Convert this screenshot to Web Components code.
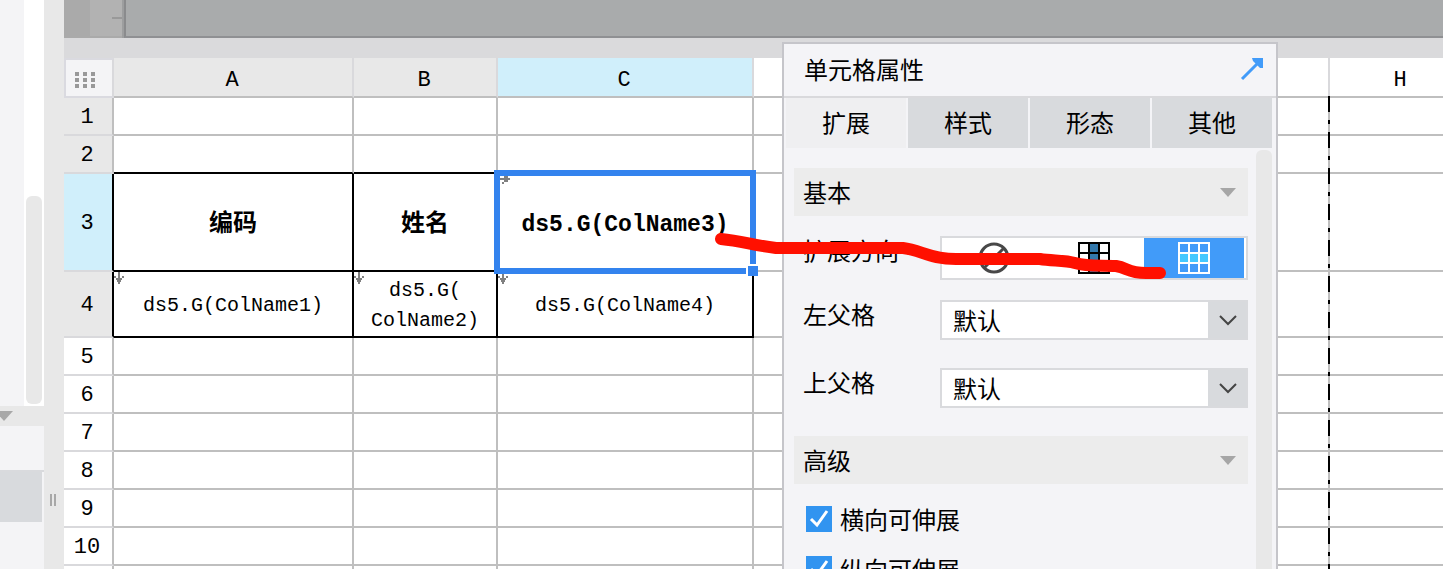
<!DOCTYPE html>
<html lang="zh-CN">
<head>
<meta charset="utf-8">
<title>单元格属性</title>
<style>
html, body { margin: 0; height: 100%; }
body { overflow: hidden; font-family: "Liberation Mono", "Noto Sans CJK SC", monospace; color: #000; }
</style>
</head>
<body>
<report-designer>
  <side-pane slot="side"></side-pane>
  <top-ruler slot="top"></top-ruler>
  <sheet-grid slot="sheet"></sheet-grid>
  <property-panel slot="panel">
    <span slot="title">单元格属性</span>
    <property-section heading="基本">
      <direction-field>扩展方向</direction-field>
      <select-field value="默认">左父格</select-field>
      <select-field value="默认">上父格</select-field>
    </property-section>
    <property-section heading="高级">
      <check-field>横向可伸展</check-field>
      <check-field>纵向可伸展</check-field>
    </property-section>
  </property-panel>
  <pen-mark slot="mark"></pen-mark>
</report-designer>

<script>
function define(name, html, setup) {
  const template = document.createElement('template');
  template.innerHTML = html;
  customElements.define(name, class extends HTMLElement {
    constructor() {
      super();
      this.attachShadow({ mode: 'open' }).append(template.content.cloneNode(true));
    }
    connectedCallback() { if (setup) setup(this, this.shadowRoot); }
  });
}

define('report-designer', `
<style>
:host { display: flex; position: relative; height: 100vh; overflow: hidden; background: #fff; }
.split { flex: 0 0 20px; background: #e8e8e8; position: relative; }
.grip { position: absolute; left: 6px; top: 494px; width: 2px; height: 12px; border: solid #a8a8a8; border-width: 0 2px; }
main { flex: 1; min-width: 0; display: flex; flex-direction: column; position: relative; overflow: hidden; }
.band { flex: 0 0 20px; background: #dadadc; }
</style>
<slot name="side"></slot>
<div class="split"><div class="grip"></div></div>
<main>
  <slot name="top"></slot>
  <div class="band"></div>
  <slot name="sheet"></slot>
  <slot name="panel"></slot>
</main>
<slot name="mark"></slot>`);

define('side-pane', `
<style>
:host { display: flex; flex-direction: column; flex: 0 0 44px; background: #f4f4f6; }
.upper { flex: 0 0 406px; display: flex; justify-content: flex-end; }
.track { width: 20px; box-sizing: border-box; padding: 196px 2px 2px; background: #fff; }
.thumb { height: 208px; border-radius: 6px; background: #e8e8e8; }
.bar { flex: 0 0 20px; background: #e8e8e8; }
.bar svg { display: block; }
.item { height: 44px; }
.active { height: 50px; border-top: 2px solid #d9dadd; }
.active div { height: 50px; margin-right: 2px; background: #d8dadd; }
</style>
<div class="upper"><div class="track"><div class="thumb"></div></div></div>
<div class="bar"><svg width="20" height="20"><path d="M-5 5H13L4 15Z" fill="#a8a8a8"/></svg></div>
<div class="item"></div>
<div class="active"><div></div></div>`);

define('top-ruler', `
<style>
:host { display: flex; flex: 0 0 38px; background: #aaa; }
.gutter { width: 26px; }
.scale { width: 32px; height: 36px; background: #b2b2b2; display: flex; justify-content: flex-end; align-items: center; }
.tick { width: 10px; height: 2px; background: #999; }
.edge { width: 2px; background: #9d9e9f; }
.view { flex: 1; background: #a9abac; border-left: 2px solid #8a8b8d; border-bottom: 2px solid #8f9093; }
</style>
<div class="gutter"></div><div class="scale"><div class="tick"></div></div><div class="edge"></div><div class="view"></div>`);

define('expand-arrow', `
<style>
:host { display: block; position: absolute; left: 0; top: 0; line-height: 0; }
:host([right]) { left: 2px; top: 2px; }
svg { display: none; }
:host(:not([right])) .down, :host([right]) .right { display: block; }
</style>
<svg class="down" width="10" height="12" fill="#808080"><path d="M4 0H6V6H8V4H10V6H8V8H7V10H6V12H4V10H3V8H2V6H0V4H2V6H4Z"/></svg>
<svg class="right" width="10" height="10" fill="#808080"><path d="M0 2H4V0H8V2H10V4H8V6H4V4H0ZM2 6H4V8H2Z"/></svg>`);

define('sheet-grid', `
<style>
:host { display: block; flex: 1; min-height: 0; overflow: hidden; background: #fff; }
table { table-layout: fixed; border-collapse: separate; border-spacing: 0; width: 100%; min-width: 1410px; }
th, td { box-sizing: border-box; height: 38px; padding: 0; border: solid #bfbfbf; border-width: 0 2px 2px 0; text-align: center; vertical-align: middle; position: relative; }
th { font-size: 22px; line-height: 28px; font-weight: 400; }
td { font-size: 20px; line-height: 30px; }
thead th { height: 40px; padding: 8px 2px 0 0; border-right-color: #d9d9dc; background: #fff; }
tbody th { border-bottom-color: #d9d9dc; padding: 4px 2px 0 0; }
thead th.corner { padding: 4px 8px 0 0; border: 2px solid #dadae0; border-right-color: #d9d9dc; background: #f4f4f6; }
.corner svg { display: block; margin: auto; }
th.used, thead th.used { background: #e8e8e8; }
th.on, thead th.on { background: #d0effb; }
.r3 > * { height: 98px; }
.r4 > * { height: 66px; }
.r4 td { padding-top: 4px; }
.k { border-right-color: #000; border-bottom-color: #000; }
.kb { border-bottom-color: #000; }
.kr { border-right-color: #000; }
.bold { font-size: 24px; font-weight: 700; padding-top: 6px; }
.code { font-size: 23px; }
.select { position: absolute; inset: -4px; border: 6px solid #3383ee; z-index: 1; }
.handle { position: absolute; right: -8px; bottom: -8px; width: 10px; height: 10px; background: #3383ee; border: solid #fff; border-width: 2px 0 0 2px; }
.page { position: absolute; right: -2px; top: 38px; width: 2px; height: 100vh; z-index: 1;
  background: repeating-linear-gradient(#000 0 16px, #bfbfbf 16px 24px, #000 24px 28px, #bfbfbf 28px 36px); }
</style>
<table>
<colgroup><col style="width:50px"><col style="width:240px"><col style="width:144px"><col style="width:256px"><col style="width:144px"><col style="width:144px"><col style="width:144px"><col style="width:144px"><col></colgroup>
<thead><tr>
<th class="corner"><svg width="20" height="16" fill="#999"><path d="M0 0h4v4H0zM8 0h4v4H8zM16 0h4v4h-4zM0 6h4v4H0zM8 6h4v4H8zM16 6h4v4h-4zM0 12h4v4H0zM8 12h4v4H8zM16 12h4v4h-4z"/></svg></th>
<th class="used">A</th><th class="used">B</th><th class="on">C</th><th></th><th></th><th></th><th><div class="page"></div></th><th>H</th>
</tr></thead>
<tbody></tbody>
</table>`, (host, root) => {
  const empty = n => '<td></td>'.repeat(n);
  const plain = n => `<tr><th>${n}</th>${empty(8)}</tr>`;
  root.querySelector('tbody').innerHTML = `
<tr><th class="used">1</th>${empty(8)}</tr>
<tr><th class="used">2</th><td class="kb"></td><td class="kb"></td><td class="kb"></td>${empty(5)}</tr>
<tr class="r3"><th class="on kr">3</th><td class="k bold">编码</td><td class="k bold">姓名</td>
<td class="k bold code"><expand-arrow right></expand-arrow>ds5.G(ColName3)<div class="select"><div class="handle"></div></div></td>${empty(5)}</tr>
<tr class="r4"><th class="used kr">4</th><td class="k"><expand-arrow></expand-arrow>ds5.G(ColName1)</td>
<td class="k"><expand-arrow></expand-arrow>ds5.G(<br>ColName2)</td>
<td class="k"><expand-arrow></expand-arrow>ds5.G(ColName4)</td>${empty(5)}</tr>
${[5, 6, 7, 8, 9, 10].map(plain).join('')}${plain('')}`;
});

define('property-panel', `
<style>
:host { display: flex; flex-direction: column; position: absolute; left: 718px; top: 42px; width: 492px; height: 100vh; z-index: 2;
  border: 2px solid #c5c5ca; background: #f4f4f7; font: 24px/36px "Noto Sans CJK SC", sans-serif; }
header { flex: 0 0 50px; display: flex; align-items: center; justify-content: space-between; padding: 0 12px 2px 20px; border-bottom: 2px solid #d9d9dc; }
nav { display: flex; gap: 2px; padding: 0 4px 0 2px; }
nav button { flex: 1; height: 50px; padding: 0 0 2px; border: 0; background: #d8dadd; font: inherit; color: #000; }
nav button[aria-selected=true] { background: #efeff1; }
.body { flex: 1; display: flex; padding: 2px 4px 0 10px; gap: 8px; }
.content { flex: 1; padding-top: 18px; }
.scroll { width: 16px; border-radius: 6px; background: #e8e8e8; }
</style>
<header><slot name="title"></slot>
<svg width="24" height="24"><path d="M2 22L17 7" stroke="#419bf9" stroke-width="3"/><path d="M12 1H23V11H20L13 4Z" fill="#419bf9"/></svg></header>
<nav role="tablist"><button role="tab" aria-selected="true">扩展</button><button role="tab">样式</button><button role="tab">形态</button><button role="tab">其他</button></nav>
<div class="body"><div class="content"><slot></slot></div><div class="scroll"></div></div>`);

define('property-section', `
<style>
:host { display: block; }
h2 { display: flex; align-items: center; justify-content: space-between; height: 48px; margin: 0 0 2px; padding: 0 12px 0 9px; background: #ececec; font: inherit; }
svg { padding-top: 2px; }
</style>
<h2><span></span><svg width="16" height="12"><path d="M0 1H16L8 10Z" fill="#a6a6a6"/></svg></h2>
<slot></slot>`, (host, root) => { root.querySelector('span').textContent = host.getAttribute('heading'); });

define('direction-field', `
<style>
:host { display: flex; justify-content: space-between; align-items: flex-start; padding: 18px 0 20px 9px; line-height: 28px; }
.group { display: flex; box-sizing: border-box; width: 308px; height: 44px; padding: 0 2px; border: 2px solid #d9dadd; background: #fff; }
button { display: flex; flex: 0 0 100px; align-items: center; justify-content: center; padding: 0; border: 0; background: #fff; }
button[aria-pressed=true] { background: #419bf9; }
</style>
<span id="name"><slot></slot></span>
<div class="group" role="group" aria-labelledby="name">
<button aria-label="不扩展"><svg width="32" height="32" fill="none" stroke="#484848" stroke-width="3"><circle cx="16" cy="16" r="14"/><path d="M6 26L26 6"/></svg></button>
<button aria-label="纵向"><svg width="32" height="32"><path d="M11 1H21V31H11Z" fill="#3278ac"/><path d="M1 1H31V31H1ZM11 1V31M21 1V31M1 11H31M1 21H31" fill="none" stroke="#000" stroke-width="2"/></svg></button>
<button aria-label="横向" aria-pressed="true"><svg width="32" height="32"><path d="M1 11H31V21H1Z" fill="#44c8ff"/><path d="M1 1H31V31H1ZM11 1V31M21 1V31M1 11H31M1 21H31" fill="none" stroke="#fff" stroke-width="2"/></svg></button>
</div>`);

define('select-field', `
<style>
:host { display: flex; justify-content: space-between; align-items: flex-start; padding: 0 0 28px 9px; line-height: 28px; }
.box { position: relative; width: 308px; height: 40px; }
select { appearance: none; width: 100%; height: 100%; box-sizing: border-box; margin: 0; padding: 0 38px 2px 11px; border: 2px solid #d9dadd; border-radius: 0;
  background: linear-gradient(to left, #d8dadd 38px, #fff 38px); font: inherit; line-height: 36px; color: #000; }
svg { position: absolute; right: 10px; top: 12px; pointer-events: none; }
</style>
<label for="field"><slot></slot></label>
<div class="box"><select id="field"><option></option></select>
<svg width="20" height="16" fill="none" stroke="#444" stroke-width="2"><path d="M2 4L10 12L18 4"/></svg></div>`,
(host, root) => { root.querySelector('option').textContent = host.getAttribute('value'); });

define('check-field', `
<style>
:host { display: block; padding: 16px 0 0 12px; }
label { display: flex; align-items: center; gap: 8px; height: 34px; line-height: 34px; position: relative; }
input { appearance: none; width: 26px; height: 26px; margin: 0; background: #3194f0; }
svg { position: absolute; left: 0; top: 4px; pointer-events: none; }
</style>
<label><input type="checkbox" checked><svg width="26" height="26" fill="none" stroke="#fff" stroke-width="3"><path d="M5 13L11 19L21 5"/></svg><slot></slot></label>`);

define('pen-mark', `
<style>
:host { display: block; position: absolute; left: 710px; top: 228px; z-index: 3; line-height: 0; pointer-events: none; }
</style>
<svg width="466" height="56" viewBox="710 228 466 56" fill="none" stroke="#ff1000" stroke-width="12" stroke-linecap="round" stroke-linejoin="round"><path d="M721 239C742 241 752 245 776 248H903C921 250 930 259 956 259H1040C1052 261 1065 260 1075 263C1088 267 1102 265 1116 266C1128 268 1128 273 1146 273H1160"/></svg>`);
</script>
</body>
</html>
